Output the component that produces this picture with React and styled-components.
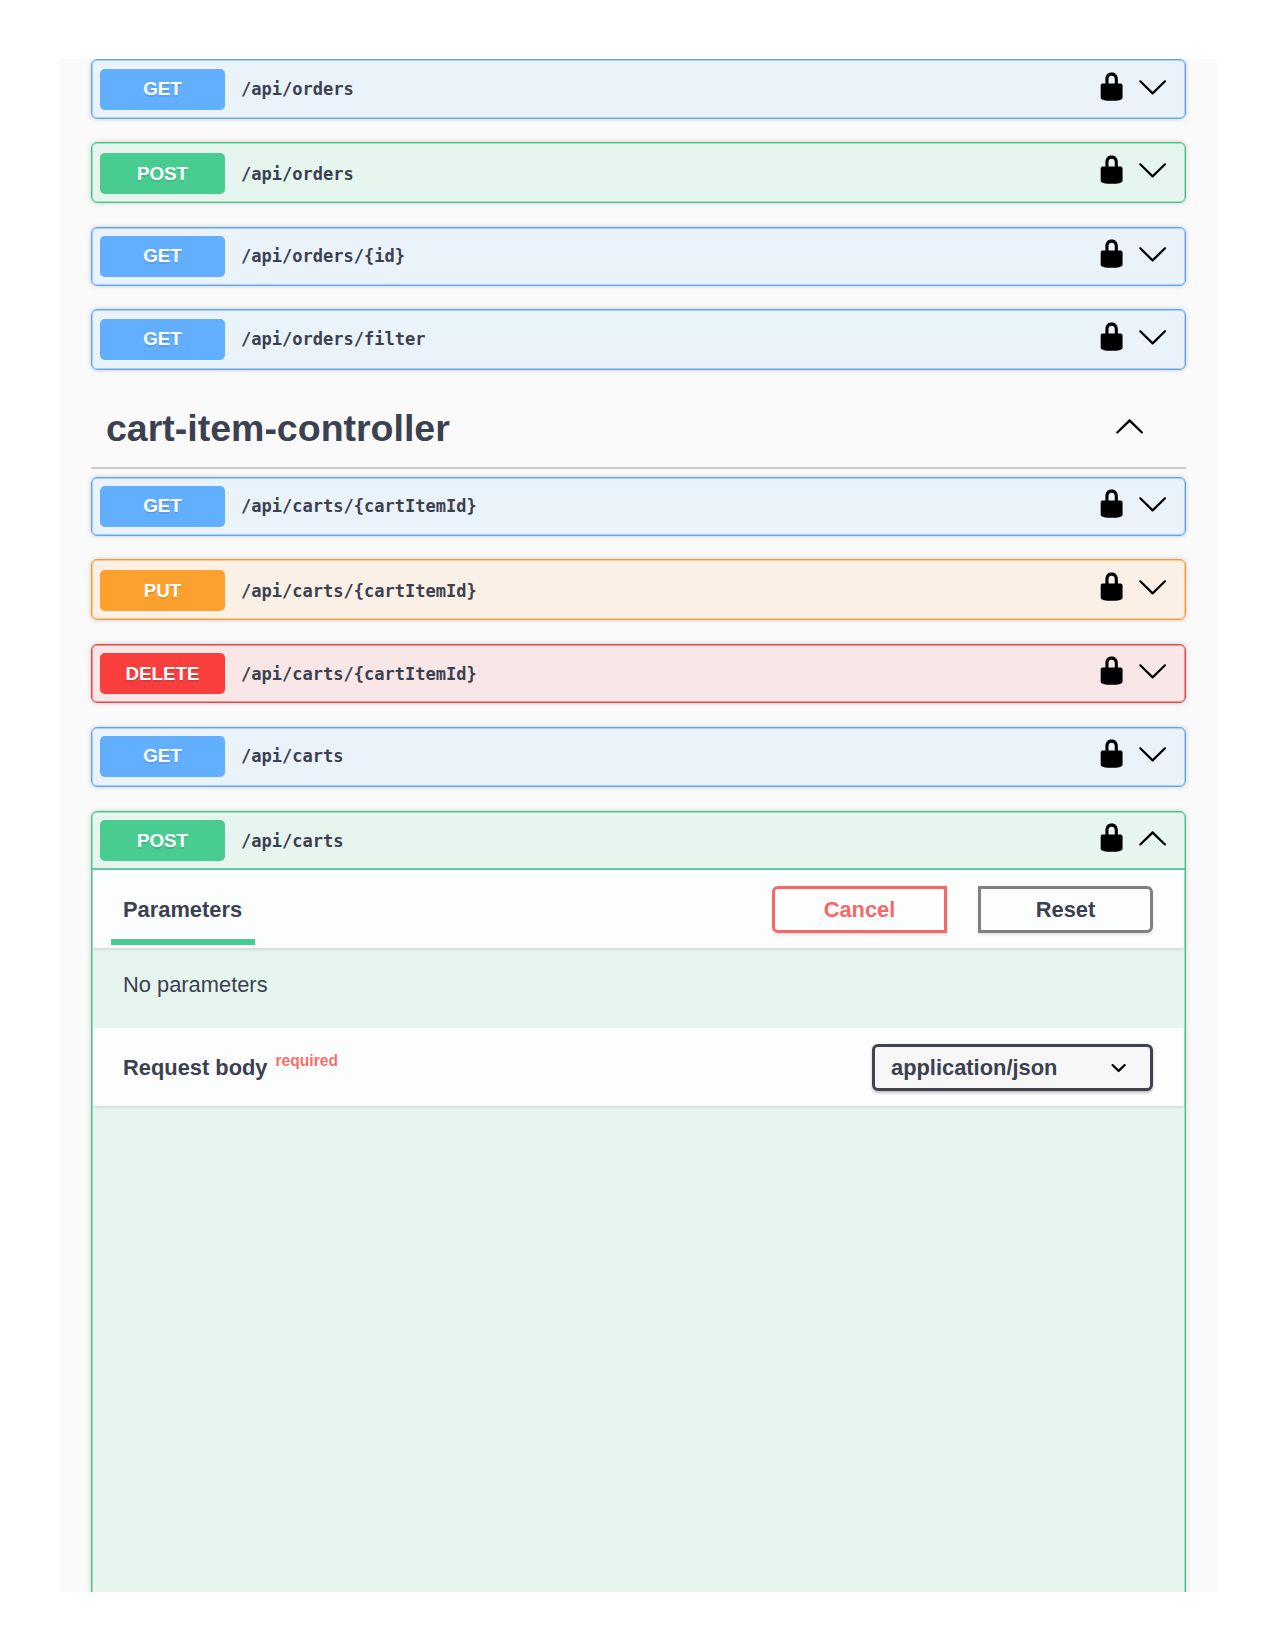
import React from "react";
import styled, { createGlobalStyle } from "styled-components";

const GlobalStyle = createGlobalStyle`
  *, *::before, *::after { box-sizing: border-box; }
  html, body { margin: 0; padding: 0; background: #fff; }
  body {
    color: #3b4151;
    font-family: "Liberation Sans", Arial, sans-serif;
    overflow: hidden;
  }
`;

const METHODS = {
  GET: { color: "#61affe", rgb: "97, 175, 254", line: "#62a5ec" },
  POST: { color: "#49cc90", rgb: "73, 204, 144", line: "#4fc08c" },
  PUT: { color: "#fca130", rgb: "252, 161, 48", line: "#ec9c3a" },
  DELETE: { color: "#f93e3e", rgb: "249, 62, 62", line: "#e14646" },
};

const Page = styled.div`
  height: 1650px;
  padding: 59px 58px 58px 59px;
`;

const Panel = styled.main`
  height: 1532.5px;
  padding: 0 31px 0 32px;
  overflow: hidden;
  background: #fafafa;
`;

const Block = styled.section`
  height: ${(p) => p.$height}px;
  margin-bottom: ${(p) => p.$gap}px;
  overflow: hidden;
  border: 1px solid ${(p) => METHODS[p.$method].line};
  border-radius: 6px;
  background: rgba(${(p) => METHODS[p.$method].rgb}, 0.1);
  box-shadow:
    0 0 5px rgba(0, 0, 0, 0.19),
    inset 0 0 0 1px rgba(${(p) => METHODS[p.$method].rgb}, 0.5);
`;

const Summary = styled.header`
  display: flex;
  align-items: flex-start;
  height: 57px;
  padding: 0 17.2px 0 8px;
`;

const Badge = styled.span`
  width: 125px;
  height: 41px;
  margin-top: ${(p) => p.$offset}px;
  border-radius: 4.7px;
  background: ${(p) => METHODS[p.$method].color};
  color: #fff;
  font-size: 18.75px;
  font-weight: 700;
  line-height: ${(p) => 39 + 2 * p.$shift}px;
  text-align: center;
  text-shadow: 0 1.5px 0 rgba(0, 0, 0, 0.1);
`;

const Path = styled.code`
  flex: 1;
  margin-top: ${(p) => p.$offset}px;
  padding-left: 16px;
  font-family: "DejaVu Sans Mono", monospace;
  font-size: 17.05px;
  font-weight: 700;
  line-height: ${(p) => 41 + 2 * p.$shift}px;
`;

const Icons = styled.div`
  display: flex;
  gap: 9.4px;
  margin-top: ${(p) => p.$offset}px;
`;

const Icon = styled.svg.attrs({ viewBox: "0 0 20 20" })`
  display: block;
  flex: none;
  width: 31.25px;
  height: 31.25px;
  fill: #000;
`;

const TagHeader = styled.header`
  display: flex;
  justify-content: space-between;
  height: 99px;
  margin-bottom: 8px;
  padding: 0 41px 0 15px;
  border-bottom: 2px solid #cbccd0;
`;

const TagName = styled.h3`
  margin: 36px 0 0;
  font-size: 37.5px;
  font-weight: 700;
  line-height: 44px;
`;

const TagIcon = styled.div`
  margin-top: 39.5px;
`;

const SectionHeader = styled.div`
  display: flex;
  align-items: center;
  justify-content: space-between;
  height: 78px;
  margin: 0 1px;
  padding: 0 31px 0 18px;
  background: rgba(255, 255, 255, 0.85);
  box-shadow: 0 1.5px 3px rgba(0, 0, 0, 0.12);
`;

const OpenBody = styled.div`
  margin-top: -1px;
  border-top: 2px solid #62c99a;
`;

const Tab = styled.h4`
  align-self: flex-end;
  width: 144px;
  height: 61px;
  margin: 0 0 3px;
  padding-left: 12px;
  border-bottom: 6px solid #49cc90;
  font-size: 21.875px;
  line-height: 52px;
`;

const Label = styled.h4`
  display: flex;
  margin: 0;
  padding: 2px 0 0 12px;
  font-size: 21.875px;
  line-height: 36px;
`;

const Required = styled.span`
  margin: -7px 0 0 8px;
  color: rgba(255, 0, 0, 0.6);
  font-size: 15.6px;
`;

const NoParams = styled.p`
  height: 80px;
  margin: 0;
  padding: 17px 31px 0;
  font-size: 21.875px;
  line-height: 39px;
`;

const Actions = styled.div`
  display: flex;
  gap: 31px;
`;

const Button = styled.button`
  width: 175px;
  height: 47px;
  padding: 2px 0 0;
  border: 3px solid ${(p) => (p.$cancel ? "#f66868" : "#808080")};
  border-radius: ${(p) => (p.$cancel ? "6px 0 0 6px" : "0 6px 6px 0")};
  background: transparent;
  box-shadow: 0 1.5px 3px rgba(0, 0, 0, 0.1);
  color: ${(p) => (p.$cancel ? "#f66868" : "#3b4151")};
  font: 700 21.875px "Liberation Sans", Arial, sans-serif;
`;

const Select = styled.div`
  display: flex;
  align-items: center;
  justify-content: space-between;
  width: 281px;
  height: 47px;
  padding: 1px 16px 0;
  border: 3px solid #41444e;
  border-radius: 6px;
  background: #f7f7f7;
  box-shadow: 0 1.5px 3px rgba(0, 0, 0, 0.25);
  font-size: 21.875px;
  font-weight: 700;
`;

const Lock = () => (
  <Icon>
    <path d="M15.8 8H14V5.6C14 2.703 12.665 1 10 1 7.334 1 6 2.703 6 5.6V8H4c-.553 0-1 .646-1 1.199V17c0 .549.428 1.139.951 1.307l1.197.387C5.672 18.861 6.55 19 7.1 19h5.8c.549 0 1.428-.139 1.951-.307l1.196-.387c.524-.167.953-.757.953-1.306V9.199C17 8.646 16.352 8 15.8 8zM12 8H8V5.199C8 3.754 8.797 3 10 3c1.203 0 2 .754 2 2.199V8z" />
  </Icon>
);

const ArrowDown = () => (
  <Icon>
    <path d="M17.418 6.109c.272-.268.709-.268.979 0s.271.701 0 .969l-7.908 7.83c-.27.268-.707.268-.979 0l-7.908-7.83c-.27-.268-.27-.701 0-.969.271-.268.709-.268.979 0L10 13.25z" />
  </Icon>
);

const ArrowUp = () => (
  <Icon>
    <path d="M17.418 14.908c.272.268.709.268.979 0s.271-.701 0-.969l-7.908-7.83c-.27-.268-.707-.268-.979 0l-7.908 7.83c-.27.268-.27.701 0 .969.271.268.709.268.979 0L10 7.767z" />
  </Icon>
);

const SelectArrow = () => (
  <Icon>
    <path d="M13.418 7.859a.695.695 0 0 1 .978 0 .68.68 0 0 1 0 .969l-3.908 3.83a.697.697 0 0 1-.979 0l-3.908-3.83a.68.68 0 0 1 0-.969.695.695 0 0 1 .978 0L10 11z" />
  </Icon>
);

const ORDERS = [
  { method: "GET", path: "/api/orders", height: 60, gap: 23, badge: 9, icons: 10.7 },
  { method: "POST", path: "/api/orders", height: 61, gap: 24, badge: 10, icons: 10.6, shift: 1 },
  { method: "GET", path: "/api/orders/{id}", height: 59, gap: 23, badge: 8, icons: 9.6 },
  { method: "GET", path: "/api/orders/filter", height: 61, gap: 0, badge: 9, icons: 10.6 },
];

const CARTS = [
  { method: "GET", path: "/api/carts/{cartItemId}", height: 59, gap: 23, badge: 8, icons: 9.6 },
  { method: "PUT", path: "/api/carts/{cartItemId}", height: 61, gap: 24, badge: 10, icons: 10.6, shift: 1 },
  { method: "DELETE", path: "/api/carts/{cartItemId}", height: 59, gap: 24, badge: 8, icons: 9.6, shift: 1 },
  { method: "GET", path: "/api/carts", height: 60, gap: 24, badge: 8, icons: 9.6 },
];

function Operation({ method, path, height, gap, badge, icons, shift = 0, children }) {
  return (
    <Block $method={method} $height={height} $gap={gap}>
      <Summary>
        <Badge $method={method} $offset={badge} $shift={shift}>{method}</Badge>
        <Path $offset={badge} $shift={shift}>{path}</Path>
        <Icons $offset={icons}>
          <Lock />
          {children ? <ArrowUp /> : <ArrowDown />}
        </Icons>
      </Summary>
      {children}
    </Block>
  );
}

export default function App() {
  return (
    <>
      <GlobalStyle />
      <Page>
        <Panel>
          {ORDERS.map((op, i) => <Operation key={i} {...op} />)}
          <TagHeader>
            <TagName>cart-item-controller</TagName>
            <TagIcon><ArrowUp /></TagIcon>
          </TagHeader>
          {CARTS.map((op, i) => <Operation key={i} {...op} />)}
          <Operation method="POST" path="/api/carts" height={900} gap={0} badge={8} icons={9.6} shift={1}>
            <OpenBody>
              <SectionHeader>
                <Tab>Parameters</Tab>
                <Actions>
                  <Button $cancel>Cancel</Button>
                  <Button>Reset</Button>
                </Actions>
              </SectionHeader>
              <NoParams>No parameters</NoParams>
              <SectionHeader>
                <Label>
                  Request body<Required>required</Required>
                </Label>
                <Select>
                  application/json
                  <SelectArrow />
                </Select>
              </SectionHeader>
            </OpenBody>
          </Operation>
        </Panel>
      </Page>
    </>
  );
}
